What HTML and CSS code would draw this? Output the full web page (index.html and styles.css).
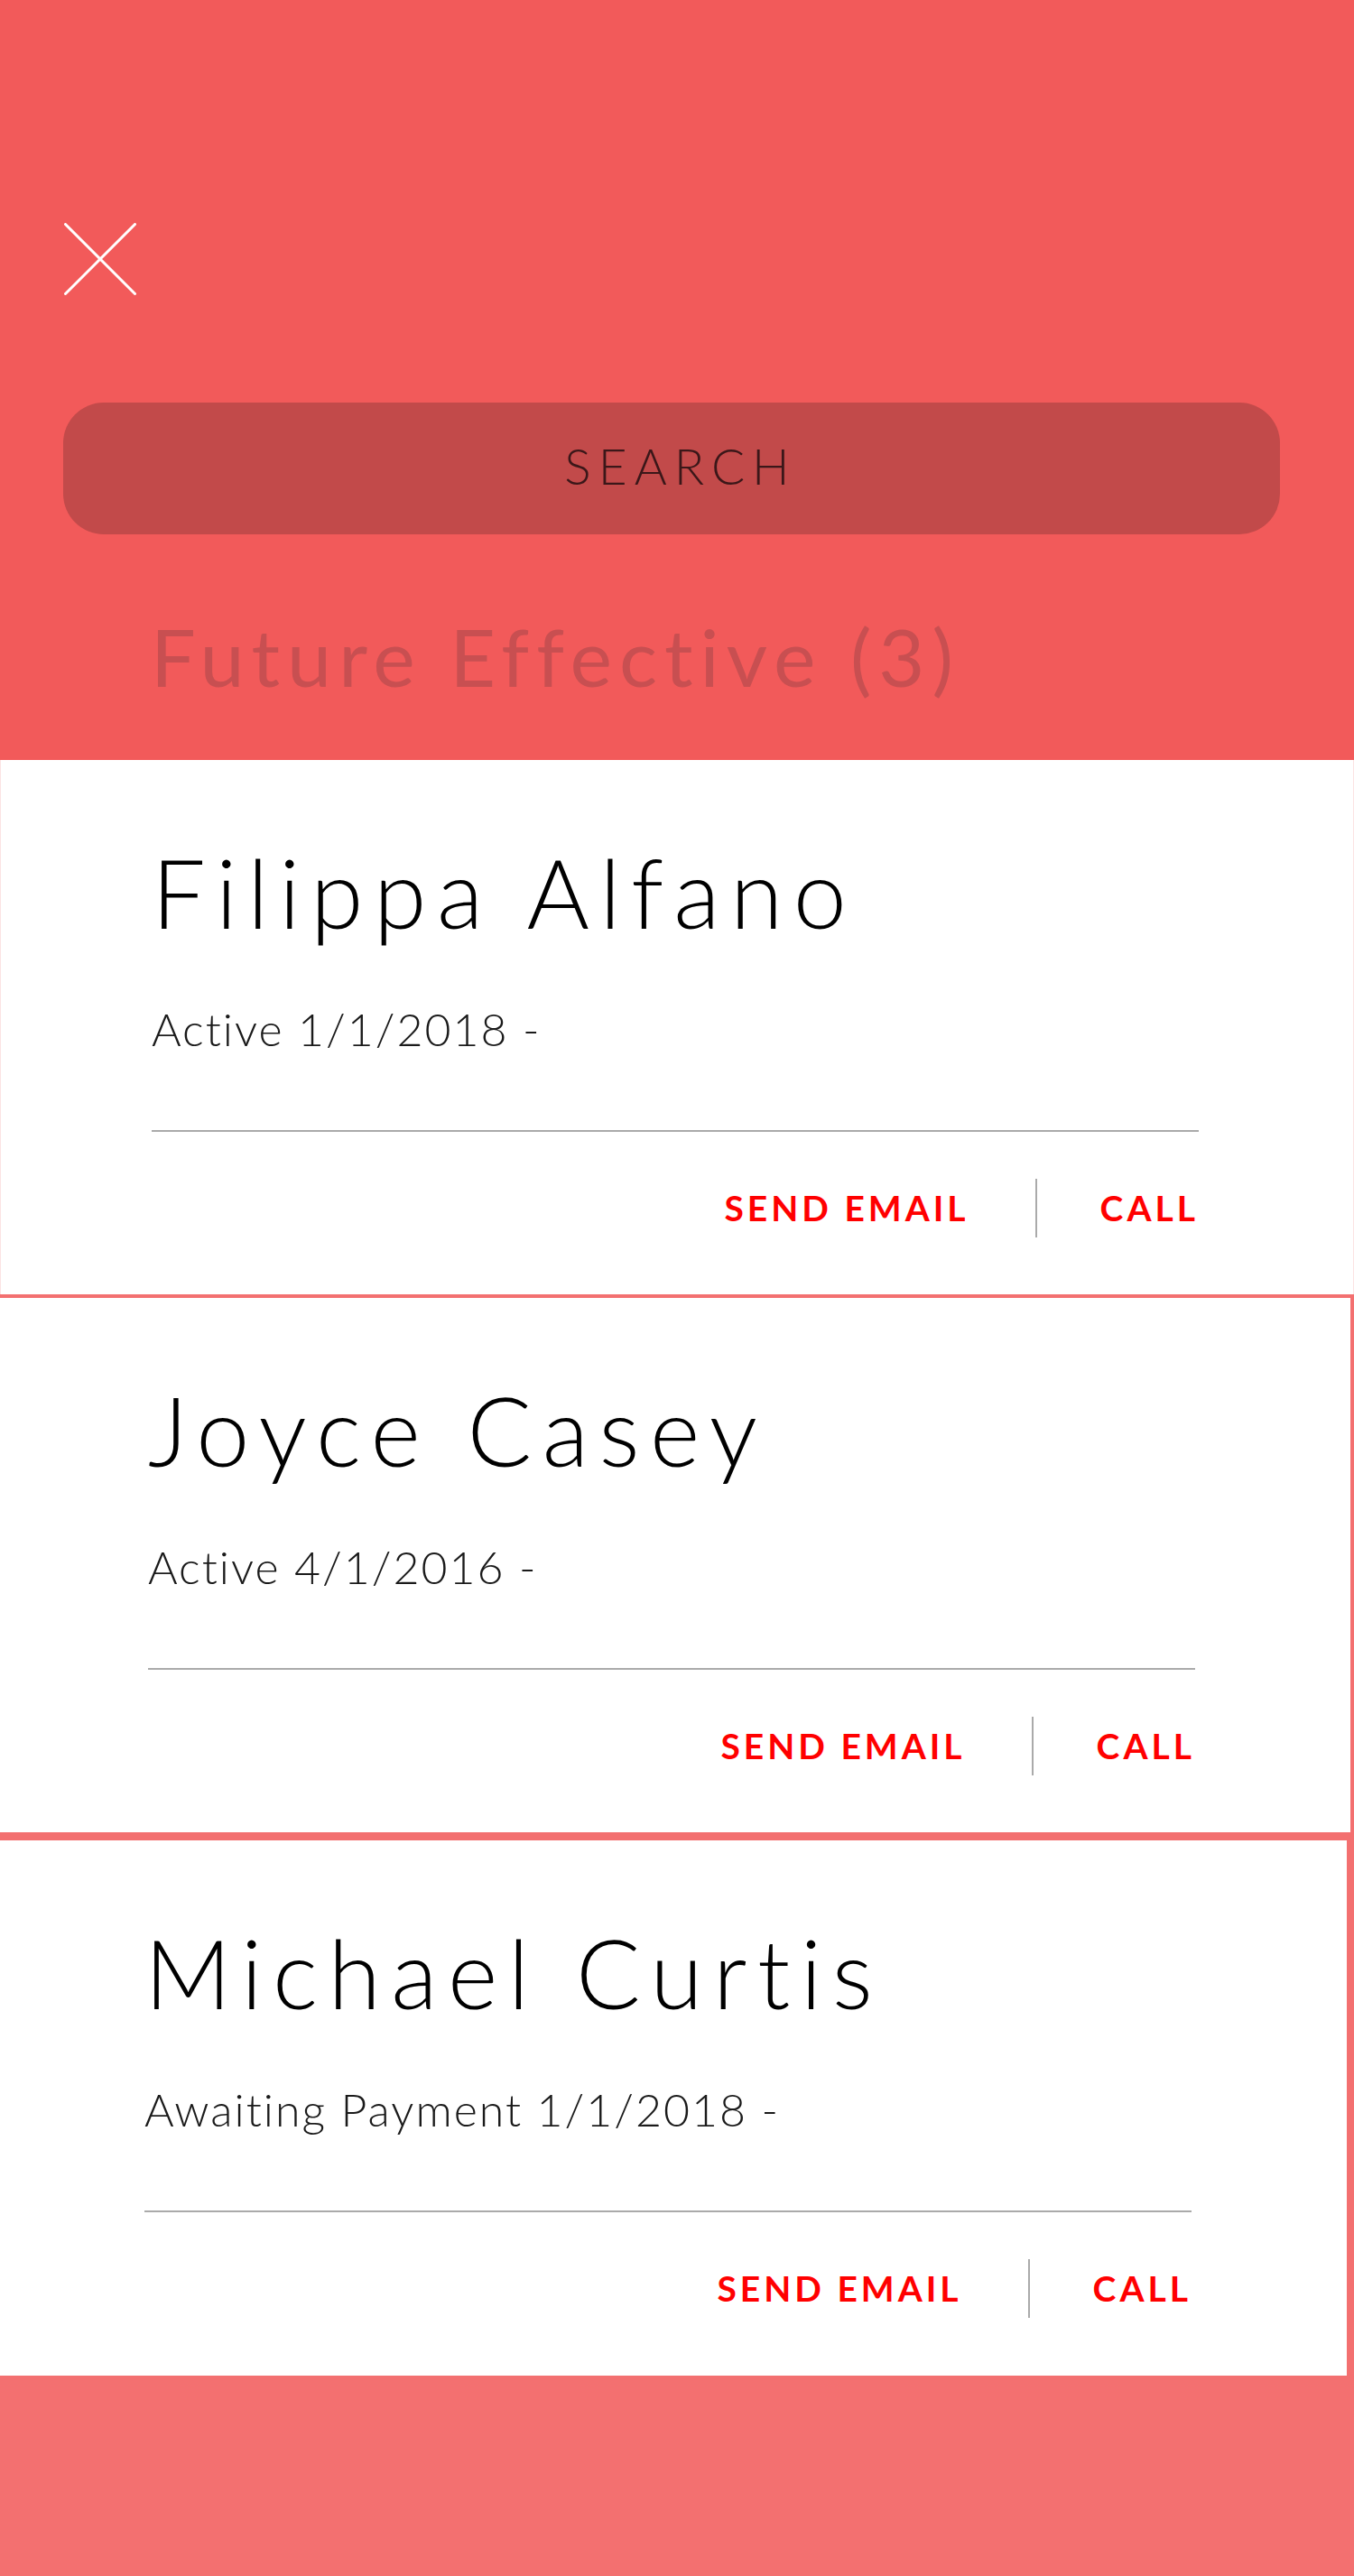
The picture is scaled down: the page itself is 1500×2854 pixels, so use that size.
FILE: index.html
```html
<!DOCTYPE html>
<html lang="en">
<head>
<meta charset="utf-8">
<title>Future Effective</title>
<link rel="stylesheet" href="styles.css">
</head>
<body>
<div class="screen">
  <header class="header">
    <button class="close" aria-label="Close">
      <svg width="80" height="80" viewBox="0 0 80 80" aria-hidden="true">
        <line x1="1.5" y1="1.5" x2="78.5" y2="78.5" stroke="#fff" stroke-width="3" stroke-linecap="round"/>
        <line x1="78.5" y1="1.5" x2="1.5" y2="78.5" stroke="#fff" stroke-width="3" stroke-linecap="round"/>
      </svg>
    </button>
    <div class="search">SEARCH</div>
    <h2 class="section-title">Future Effective (3)</h2>
  </header>

  <main class="list">
    <article class="card card--first">
      <h3 class="card__name">Filippa Alfano</h3>
      <p class="card__status">Active 1/1/2018 -</p>
      <div class="card__divider"></div>
      <div class="card__actions">
        <a class="card__action">SEND EMAIL</a>
        <span class="card__sep"></span>
        <a class="card__action">CALL</a>
      </div>
    </article>

    <article class="card card--second">
      <h3 class="card__name">Joyce Casey</h3>
      <p class="card__status">Active 4/1/2016 -</p>
      <div class="card__divider"></div>
      <div class="card__actions">
        <a class="card__action">SEND EMAIL</a>
        <span class="card__sep"></span>
        <a class="card__action">CALL</a>
      </div>
    </article>

    <article class="card card--third">
      <h3 class="card__name">Michael Curtis</h3>
      <p class="card__status">Awaiting Payment 1/1/2018 -</p>
      <div class="card__divider"></div>
      <div class="card__actions">
        <a class="card__action">SEND EMAIL</a>
        <span class="card__sep"></span>
        <a class="card__action">CALL</a>
      </div>
    </article>
  </main>
</div>
</body>
</html>
```

FILE: styles.css
```css
* {
  box-sizing: border-box;
}

html, body {
  margin: 0;
  padding: 0;
}

body {
  background: #f37070;
  font-family: "Lato", "Open Sans", "Liberation Sans", sans-serif;
  min-height: 2854px;
  overflow-x: hidden;
}

.screen {
  width: 1500px;
}

.header {
  background: #f25a5a;
  height: 842px;
  padding: 247px 82px 0 70px;
  display: flex;
  flex-direction: column;
  align-items: flex-start;
}

.close {
  width: 80px;
  height: 80px;
  margin-left: 1px;
  padding: 0;
  border: 0;
  background: none;
  display: block;
}

.close svg {
  display: block;
}

.search {
  margin-top: 119px;
  width: 1348px;
  height: 146px;
  border-radius: 45px;
  background: #c24a4a;
  color: #3b1719;
  font-size: 55px;
  font-weight: 300;
  letter-spacing: 8px;
  display: flex;
  align-items: center;
  justify-content: center;
  padding-left: 20px;
  padding-bottom: 6px;
}

.section-title {
  margin: 85px 0 0 97px;
  font-size: 88px;
  line-height: 100px;
  font-weight: 400;
  color: #c84f51;
  letter-spacing: 8px;
}

.list {
  display: flex;
  flex-direction: column;
}

.card {
  width: 1500px;
  height: 592px;
  background: #fff;
  padding: 86px 172px 0 168px;
  display: flex;
  flex-direction: column;
}

.card--first {
  border-left: 1px solid #fbe3e3;
  border-right: 1px solid #fbe3e3;
  padding-left: 167px;
  padding-right: 171px;
}

.card--second {
  margin-top: 4px;
  margin-left: -4px;
}

.card--third {
  margin-top: 9px;
  margin-left: -8px;
  height: 593px;
}

.card__name {
  margin: 0;
  font-size: 106px;
  line-height: 120px;
  font-weight: 300;
  color: #000;
  letter-spacing: 11.5px;
  white-space: nowrap;
}

.card__status {
  margin: 62px 0 0;
  font-size: 50px;
  line-height: 60px;
  font-weight: 300;
  color: #1a1a1a;
  letter-spacing: 2px;
  white-space: nowrap;
}

.card__divider {
  margin-top: 82px;
  height: 2px;
  background: #aaaaaa;
}

.card__actions {
  margin-top: 52px;
  height: 65px;
  display: flex;
  justify-content: flex-end;
  align-items: center;
}

.card__action {
  font-size: 39px;
  line-height: 65px;
  font-weight: 700;
  color: #ff0000;
  letter-spacing: 4px;
  text-decoration: none;
  white-space: nowrap;
}

.card__sep {
  width: 2px;
  height: 65px;
  background: #aaaaaa;
  margin: 0 70px 0 73px;
}
```
